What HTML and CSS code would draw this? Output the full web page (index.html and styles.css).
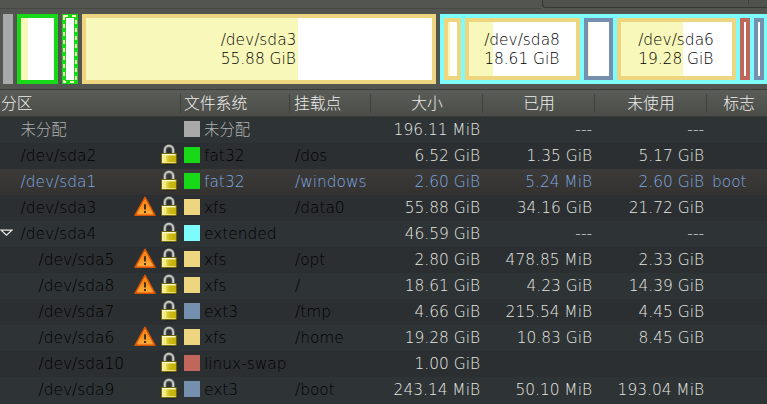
FILE: index.html
```html
<!DOCTYPE html>
<html lang="zh-CN">
<head>
<meta charset="utf-8">
<title>分区</title>
<link rel="stylesheet" href="styles.css">
</head>
<body>
<svg width="0" height="0" class="defs" aria-hidden="true">
  <defs>
    <linearGradient id="gold"><stop offset="0" stop-color="#f4f09b"/><stop offset=".2" stop-color="#eee76f"/><stop offset=".55" stop-color="#cdbb14"/><stop offset="1" stop-color="#c2ad08"/></linearGradient>
    <linearGradient id="orange" x1="0" y1="0" x2="0" y2="1"><stop offset="0" stop-color="#f57900"/><stop offset="1" stop-color="#fcaf3e"/></linearGradient>
    <symbol id="lock" viewBox="0 0 18 21">
      <ellipse cx="10" cy="19.6" rx="8" ry="1.2" fill="#151819" opacity=".55"/>
      <path d="M4.8 10V6a4.2 4.2 0 0 1 8.4 0V10" fill="none" stroke="#777a73" stroke-width="3.2"/>
      <path d="M4.8 10V6a4.2 4.2 0 0 1 8.4 0V10" fill="none" stroke="#d0d2cc" stroke-width="1.6"/>
      <rect x="1.5" y="9.5" width="15" height="10" rx=".6" fill="url(#gold)" stroke="#71620a"/>
      <path d="M2.5 10.7h13" stroke="#fffbd0" stroke-width="1.4"/>
      <path d="M3 12v6.5M5.5 12v6.5" stroke="#fffbc0" opacity=".7"/>
      <path d="M2.5 18.6h13" stroke="#f3eda0" stroke-width=".8"/>
    </symbol>
    <symbol id="warn" viewBox="0 0 22 21">
      <path d="M11 1.3 21 19.3H1Z" fill="#f57900" stroke="#d45500" stroke-width="1.6" stroke-linejoin="round"/>
      <path d="M11 3.7 19 18H3Z" fill="url(#orange)" stroke="#fc8f2e" stroke-width="1" stroke-linejoin="round"/>
      <path d="M11 8.2v5.2M11 15v2" stroke="#30291f" stroke-width="1.8"/>
    </symbol>
  </defs>
</svg>
<div class="toolbar"><div class="rule"></div><div class="tab"><i></i></div></div>
<div class="disk">
  <div class="unallocated"></div>
  <div class="part green sda2"><i class="used"></i></div>
  <div class="part green sda1"><svg width="16" height="70"><rect x="2" y="2" width="12" height="66" fill="none" stroke="#f8f8ba" stroke-width="2" stroke-dasharray="4 4"/></svg></div>
  <div class="part sand sda3"><i class="used"></i><span>/dev/sda3<br>55.88 GiB</span></div>
  <div class="extended">
    <div class="part sand sda5"><i class="used"></i></div>
    <div class="part sand sda8"><i class="used"></i><span>/dev/sda8<br>18.61 GiB</span></div>
    <div class="part blue sda7"><i class="used"></i></div>
    <div class="part sand sda6"><i class="used"></i><span>/dev/sda6<br>19.28 GiB</span></div>
    <div class="part red thin"></div>
    <div class="part blue thin"></div>
  </div>
</div>
<div class="row head"><div>分区</div><div>文件系统</div><div>挂载点</div><div>大小</div><div>已用</div><div>未使用</div><div>标志</div></div>
<div class="row none"><div class="name"><span>未分配</span></div><div class="fs"><i class="sw gray"></i>未分配</div><div></div><div class="num">196.11 MiB</div><div class="num">---</div><div class="num">---</div><div></div></div>
<div class="row"><div class="name"><span>/dev/sda2</span><svg class="lock"><use href="#lock"/></svg></div><div class="fs"><i class="sw lime"></i>fat32</div><div class="mount">/dos</div><div class="num">6.52 GiB</div><div class="num">1.35 GiB</div><div class="num">5.17 GiB</div><div></div></div>
<div class="row selected"><div class="name"><span>/dev/sda1</span><svg class="lock"><use href="#lock"/></svg></div><div class="fs"><i class="sw lime"></i>fat32</div><div class="mount">/windows</div><div class="num">2.60 GiB</div><div class="num">5.24 MiB</div><div class="num">2.60 GiB</div><div class="flag">boot</div></div>
<div class="row"><div class="name"><span>/dev/sda3</span><svg class="warn"><use href="#warn"/></svg><svg class="lock"><use href="#lock"/></svg></div><div class="fs"><i class="sw xfs"></i>xfs</div><div class="mount">/data0</div><div class="num">55.88 GiB</div><div class="num">34.16 GiB</div><div class="num">21.72 GiB</div><div></div></div>
<div class="row"><div class="name parent"><svg class="arrow" viewBox="0 0 13 8"><path d="M1.2 1.2h10.6L6.5 6.2Z" fill="#2b2f31" stroke="#e6e8e3" stroke-width="1.2"/></svg><span>/dev/sda4</span><svg class="lock"><use href="#lock"/></svg></div><div class="fs"><i class="sw cyan"></i>extended</div><div></div><div class="num">46.59 GiB</div><div class="num">---</div><div class="num">---</div><div></div></div>
<div class="row"><div class="name child"><span>/dev/sda5</span><svg class="warn"><use href="#warn"/></svg><svg class="lock"><use href="#lock"/></svg></div><div class="fs"><i class="sw xfs"></i>xfs</div><div class="mount">/opt</div><div class="num">2.80 GiB</div><div class="num">478.85 MiB</div><div class="num">2.33 GiB</div><div></div></div>
<div class="row"><div class="name child"><span>/dev/sda8</span><svg class="warn"><use href="#warn"/></svg><svg class="lock"><use href="#lock"/></svg></div><div class="fs"><i class="sw xfs"></i>xfs</div><div class="mount">/</div><div class="num">18.61 GiB</div><div class="num">4.23 GiB</div><div class="num">14.39 GiB</div><div></div></div>
<div class="row"><div class="name child"><span>/dev/sda7</span><svg class="lock"><use href="#lock"/></svg></div><div class="fs"><i class="sw ext"></i>ext3</div><div class="mount">/tmp</div><div class="num">4.66 GiB</div><div class="num">215.54 MiB</div><div class="num">4.45 GiB</div><div></div></div>
<div class="row"><div class="name child"><span>/dev/sda6</span><svg class="warn"><use href="#warn"/></svg><svg class="lock"><use href="#lock"/></svg></div><div class="fs"><i class="sw xfs"></i>xfs</div><div class="mount">/home</div><div class="num">19.28 GiB</div><div class="num">10.83 GiB</div><div class="num">8.45 GiB</div><div></div></div>
<div class="row"><div class="name child"><span>/dev/sda10</span><svg class="lock"><use href="#lock"/></svg></div><div class="fs"><i class="sw swap"></i>linux-swap</div><div></div><div class="num">1.00 GiB</div><div></div><div></div><div></div></div>
<div class="row"><div class="name child"><span>/dev/sda9</span><svg class="lock"><use href="#lock"/></svg></div><div class="fs"><i class="sw ext"></i>ext3</div><div class="mount">/boot</div><div class="num">243.14 MiB</div><div class="num">50.10 MiB</div><div class="num">193.04 MiB</div><div></div></div>
</body>
</html>
```
FILE: styles.css
```css
* { box-sizing: border-box; }
body {
  margin: 0; height: 404px; overflow: hidden; background: #2e3335;
  font: 200 15.4px/26px "DejaVu Sans Light", "DejaVu Sans", "Noto Sans CJK SC", sans-serif;
  color: #000;
}
.defs { display: block; height: 0; }
.toolbar { display: flex; height: 14px; background: #535551; }
.rule { width: 542px; height: 9px; border-bottom: 1px solid #464844; }
.tab { flex: 1; height: 8px; border-left: 1px solid #363835; border-bottom: 1px solid #363835; border-bottom-left-radius: 4px; background: #50524e; }
.tab i { display: block; width: 1px; height: 4px; margin-left: 205px; background: #3d3f3c; }
.disk { display: flex; gap: 4px; height: 75px; padding: 0 0 5px 3px; background: #535551; }
.disk > * { flex: none; height: 70px; }
.unallocated { width: 10px; background: #a9a9a9; }
.part { display: flex; flex: none; border: 4px solid; background: #fff; }
.used { display: block; flex: none; background: #f8f8ba; }
.green { border-color: #18d918; }
.sand { border-color: #eed680; }
.blue { border-color: #7590ae; }
.red { border-color: #c1665a; }
.sda2 { width: 41px; } .sda2 .used { width: 7px; }
.sda1 { width: 16px; } .sda1 svg { flex: none; margin: -4px; }
.sda3 { width: 354px; } .sda3 .used { width: 212px; }
.sda5 { width: 17px; } .sda5 .used { width: 2px; }
.sda8 { width: 115px; } .sda8 .used { width: 24px; }
.sda7 { width: 29px; } .sda7 .used { width: 1px; }
.sda6 { width: 119px; } .sda6 .used { width: 62px; }
.thin { width: 10px; }
.extended { display: flex; gap: 4px; width: 328px; padding: 4px; background: #7dfcfe; }
.part { position: relative; }
.part span { position: absolute; inset: 0; display: grid; place-content: center; padding: 2px 1px 0 0; line-height: 19px; white-space: nowrap; }
.row { display: grid; grid-template-columns: 181px 109px 81px 112px 112px 112px 60px; height: 26px; background: #2e3335; white-space: nowrap; }
.row:nth-of-type(odd) { background: #2b2f31; }
.row.head { height: 28px; border-top: 1px solid #393b38; border-bottom: 1px solid #393b38; background: linear-gradient(#5a5c57, #4b4d49); color: #eeeeec; font-size: 15.8px; line-height: 27px; }
.head div { position: relative; text-align: center; }
.head div:nth-child(-n+3) { text-align: left; padding-left: 1px; }
.head div:nth-child(2) { padding-left: 3px; }
.head div:nth-child(3) { padding-left: 4px; }
.head div:last-child { padding-left: 4px; }
.head div:not(:last-child)::after { content: ""; position: absolute; right: 0; top: 4px; width: 1px; height: 19px; background: #3f413e; }
.name { display: flex; align-items: center; padding: 0 3px 0 20.5px; }
.name span { margin-right: auto; }
.name.child { padding-left: 38.5px; }
.name.parent { padding-left: 0; }
.arrow { width: 13px; height: 8px; margin: 0 7.5px 2px 0; }
.lock { width: 18px; height: 21px; margin-bottom: 3px; }
.warn { width: 22px; height: 21px; margin: 0 4px 3px 0; }
.fs { display: flex; align-items: center; padding-left: 3px; }
.sw { width: 16px; height: 16px; margin: 0 4px 2px 0; }
.mount { padding-left: 5px; }
.num { text-align: right; padding-right: 3px; color: #e6e8e2; }
.flag { padding-left: 5px; }
.none { color: #b0b0b0; }
.row.selected, .selected .num { color: #7caae0; }
.row.selected { background: linear-gradient(#3d3b39, #343230); }
.gray { background: #a9a9a9; } .lime { background: #18d918; } .xfs { background: #eed680; }
.cyan { background: #7dfcfe; } .ext { background: #7590ae; } .swap { background: #c1665a; }
```
